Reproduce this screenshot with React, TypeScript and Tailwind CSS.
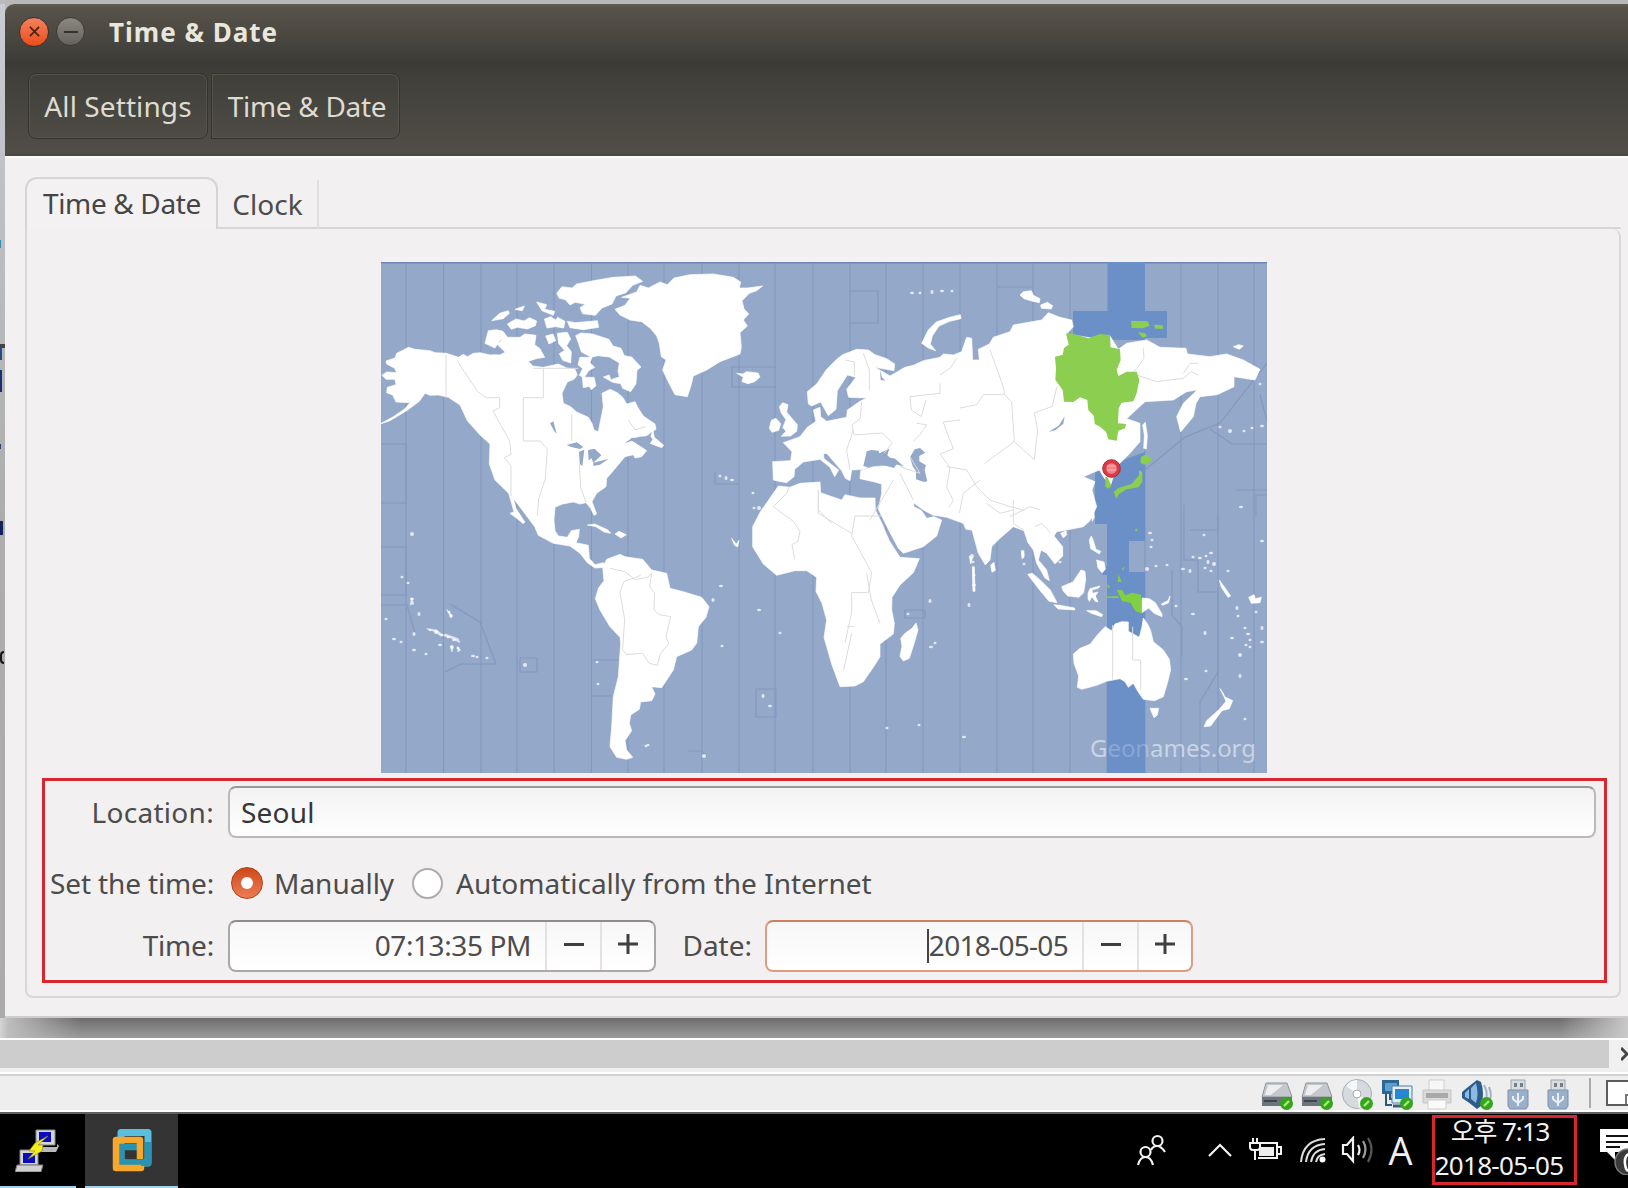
import React from "react";

const ZONE_LINES = [
  406, 443.5, 481, 517, 554, 591.5, 628, 664, 702, 739, 775, 813, 850, 886, 923, 960, 997, 1033, 1070, 1181, 1218, 1254,
];

const ATOLLS = [
  [412, 534], [402, 577], [408, 583], [412, 599], [419, 614], [386, 619], [394, 639], [401, 642], [414, 634], [414, 650], [426, 654],
  [430, 630], [436, 632], [442, 635], [448, 637], [440, 645], [452, 647], [458, 648], [454, 640], [449, 612], [451, 616], [473, 656], [477, 657],
  [487, 658], [525, 665], [597, 662], [598, 684], [721, 586], [713, 600], [722, 646], [759, 610], [780, 633], [763, 696], [770, 706],
  [646, 746], [648, 745], [704, 756], [887, 728], [919, 725], [964, 737], [930, 601], [908, 614], [931, 647], [935, 643], [969, 605],
  [1150, 533], [1152, 540], [1151, 547], [1147, 569], [1156, 566], [1167, 565], [1183, 569], [1190, 571], [1204, 535], [1200, 558],
  [1206, 556], [1208, 562], [1211, 553], [1205, 568], [1211, 571], [1214, 564], [1193, 557], [1228, 571], [1262, 541], [1237, 608], [1250, 640], [1248, 634], [1256, 612], [1262, 628], [1262, 642], [1246, 645],
  [1250, 647], [1240, 655], [1238, 616], [1206, 671], [1186, 679], [1205, 633], [1245, 719], [1193, 614], [1176, 606], [1240, 676], [1232, 638], [1245, 628],
  [1060, 562], [972, 556], [973, 562], [974, 575], [974, 585], [1023, 555], [1024, 564], [912, 293], [920, 293], [932, 292], [942, 291], [952, 291],
  [1220, 427], [1230, 431], [1244, 431], [1252, 428], [1262, 426], [1238, 347], [1260, 384], [1241, 507], [720, 476], [726, 478], [732, 480], [753, 493], [754, 508], [759, 508],
];

function WorldMap() {
  return (
    <svg viewBox="381 262 886 511" className="block h-[511px] w-[886px] shrink-0" aria-label="World time zone map">
      <rect x="381" y="262" width="886" height="511" fill="#94a9c9" />
      <g stroke="#8497bd" strokeWidth="1.1" fill="none">
        {ZONE_LINES.map((x) => (
          <path key={x} d={`M${x} 262V773`} />
        ))}
        <path d="M1107 680V773M1145 430V773M381 444h25v59h-25M381 547h25v48h-25M381 605h26l8 28M776 367h-44v20h44M850 291h28v32h-28M715 472v12h24M997 287h36M1267 444h-35l-22-15M1267 363l-47 60-35 14-40 33M1260 395l8 30" />
        <path d="M520 658h17v14h-17zM593 660h25M592 696h20M756 689h20v28h-20zM1190 530h28v-15M1184 505v55h14v32h20v80l-18 30v70M1172 570v45l10 12v30M1236 490h31M1256 515v-20h11M688 751h14l5 6M445 672l16-8h35l-16-42-30-18M905 610h20v8h-20z" />
      </g>
      <path d="M381 262.5H1267" stroke="#7187b3" strokeWidth="2" />
      <path
        d="M1107.500 262H1145V311H1167V338H1145V340H1073V311H1107.500zM1095 470L1145 452V541H1129V572H1145V640H1107V575H1102L1107 565V524H1095z M1107 640H1145V773H1107z"
        fill="#6b8fc7"
      />
      <g transform="translate(380 260) scale(.33333)" fill="#fff" stroke="#fff" strokeWidth="2" strokeLinejoin="bevel">
        <path d="M6 346L20 336L50 338L44 325L20 312L18 303L45 294L50 280L70 270L85 262L105 268L150 272L165 278L200 280L235 292L250 283L262 290L280 280L300 278L330 285L350 284L392 292L400 302L425 300L450 308L458 318L490 322L535 312L560 324L585 328L592 345L582 358L562 366L546 400L550 430L572 440L590 456L625 472L636 490L642 510L655 515L662 480L670 440L666 400L690 388L712 398L728 412L740 432L765 425L775 445L790 468L825 492L828 508L795 530L755 533L730 552L760 542L782 560L800 572L785 590L765 594L760 584L735 590L720 608L695 638L680 655L678 680L650 700L636 725L650 762L642 766L632 745L618 728L600 732L580 726L548 732L525 742L522 780L525 812L535 828L562 832L574 812L598 808L596 830L588 848L625 856L628 895L645 914L670 908L674 922L645 924L622 908L600 880L570 858L520 850L475 826L464 800L446 776L425 748L400 715L408 745L434 786L428 790L404 762L386 700L345 660L328 612L330 552L300 525L262 482L240 435L205 412L175 405L150 406L135 400L118 424L80 452L30 482L0 492L40 470L75 446L90 428L48 426L38 405L20 398L22 382L48 374L45 358L18 358z" />
        <path d="M530 100l16-20 30 4 14-12 50-10 60-10 66-4 22 16-30 12-20 22-30 10-12 24-30 12-20 22-38-5-8-18 16-10-30-6-16 8-14-16-18-4z" />
        <path d="M315 250l10-38 24-3 20 5 15 20-26 8-13 22zM350 252l30-20 40 0 14-10 34 4 -4 28 16 12 14 26-26 4-28 10-44-5-14-9-28-5 22-10zM335 182l24-22 26-8 3 8-18 16zM382 192l26-15 24 6 16-10 22 10-4 14-24 10-30-5-18 6zM405 148l28-10-6 14zM493 177l20-7 14 10 6-8 22 12-4 20-24-4-26 4zM470 126l30 8-6 14 30 6-4 12-34-14zM562 184l24 4 66-6 4 20-46 7-40-6zM497 228l22-6 8 20-20 10zM532 220l30-3 10 20-12 20 14 18-2 34-24-8-10-20 16-10-18-20zM587 227l16-8 34 3 50 16 12 20 24 7 10 22 22 4 28 30-12 10-3 40-16 24-24-10-6-14-24-4-28-16 18-6 4 14 26-8-4-18 4-24-30-18-34-4-20 5-30-16-8-25zM600 292l36 0-6 16 14 14-18 10-14 22-14-8 10-20-14-12zM607 352l35 0 6 25-14 12-6-10-18 4zM805 548l14-36 4 20 28 24-6 7z" />
      </g>
      <g transform="translate(660 260) scale(.33333)" fill="#fff" stroke="#fff" strokeWidth="2" strokeLinejoin="bevel">
        <path d="M-135 148L-105 136L-90 115L-115 112L-70 96L-60 76L-35 84L0 66L22 74L42 54L90 44L160 42L220 52L242 66L238 84L262 84L308 78L290 92L268 100L246 122L252 146L266 162L250 180L262 198L240 218L244 262L240 282L180 305L140 330L100 348L92 380L82 410L45 404L24 364L8 330L18 300L4 290L-2 250L-10 228L-28 206L-55 185L-90 180L-120 165z" />
        <path d="M230 340l18 2 12-7 34 4 6 12-16 14-20 6-18-6 4-14zM358 440l10-12 16 6-4 22 18 22 14 16-2 20-18 14-28 1 14-16-10-10 10-24-14-20zM328 505l6-24 14-6 14 16-6 20-20 6z" />
        <path d="M445 432L442 395L470 372L500 328L530 298L548 284L590 268L625 270L645 284L680 296L704 312L702 332L662 325L645 322L690 348L735 322L760 316L790 302L840 292L850 282L880 285L905 275L920 232L935 235L938 300L958 300L955 268L988 252L1000 232L1050 215L1060 195L1145 180L1165 158L1200 172L1235 180L1240 200L1220 222L1300 235L1350 228L1375 268L1400 250L1460 240L1500 262L1578 265L1582 282L1650 290L1700 282L1750 300L1800 328L1785 360L1722 350L1722 380L1672 404L1620 410L1608 430L1600 470L1562 516L1550 470L1570 430L1612 390L1580 395L1540 420L1455 425L1400 476L1440 490L1440 545L1410 580L1380 610L1345 625L1350 650L1335 658L1318 630L1270 650L1305 665L1296 690L1310 740L1290 782L1270 800L1220 810L1190 815L1182 828L1208 860L1208 888L1185 912L1160 880L1143 870L1135 900L1160 930L1168 962L1155 954L1130 910L1120 870L1104 848L1092 812L1060 800L1020 835L995 860L990 900L976 915L955 880L936 810L918 808L910 790L860 772L818 765L790 750L760 728L762 740L785 752L800 775L822 770L845 780L830 828L790 860L730 880L715 865L686 810L655 748L665 700L665 672L640 665L600 656L602 632L640 620L712 615L735 622L705 595L680 590L650 600L615 628L575 630L570 662L556 655L545 632L500 580L490 582L492 596L536 630L524 650L510 622L480 598L430 606L404 628L402 650L380 668L356 664L340 660L338 605L392 602L396 575L370 548L420 530L442 502L468 484L460 450L480 442L482 470L500 484L560 472L562 450L600 424L620 414L566 412L560 388L588 352L562 345L532 392L528 448L505 467L482 426L455 438z" />
        <path d="M785 250l20-40 24-24 40-14 32-8 2 12-34 8-32 14-20 30-6 24 16 20-22-8zM1080 105l10-10 24-3 6 14 20 10-2 12-20-4-26-8zM1142 135l20-8 16 10-4 10-30-2zM1720 260l16-6 14 4-12 10zM1448 495l8-8 6 40-3 40-8-2 2-40z" />
      </g>
      <g transform="translate(800 510) scale(.33333)" fill="#fff" stroke="#fff" strokeWidth="2" strokeLinejoin="bevel">
        <path d="M-65 -72L-30 -68L0 -80L60 -84L62 -52L90 -42L125 -30L135 -46L180 -36L225 -36L226 0L245 38L268 92L300 142L358 146L340 188L300 225L276 262L275 300L283 340L280 372L240 402L240 440L220 472L190 515L165 528L120 530L95 462L72 382L80 330L66 280L48 244L50 202L20 182L-15 182L-70 196L-110 162L-142 110L-142 50L-118 4L-90 -36z" />
        <path d="M302 385l14-16 20-14 12-16 6 20-10 36-16 50-18 8-10-14 6-30zM572 165l10-8 4 24-10 6zM683 193l14-3 30 26 24 24 16 30 4 8-24-4-30-36zM762 284l18 2 44 8 0 6-50-3zM785 230l14-6 20-8 24-36 12 4 2 24-6 40-14 14-34-4-14-16zM864 250l6-14 30-8-4 6-20 6 2 10 16-4-8 12 8 18-8-2-10-14-8 14-4-8zM868 90l6-12 6 14 8 26 14 6-4 8-26-16zM890 150l22 6 4 22-10 10-12-14zM860 302l28 0 20 12-4 6-30-10zM875 14l6-12 2 20-6 12zM782 70l16-8 2 12-10 10zM1026 264l22 2 18 12 20 34 0 8-24-10-16-16-20 14zM1084 282l20-10 6-14-4 20-18 8zM1050 595l26 0-4 20-10 8zM1260 536l10 14 4 10 24 12-10 24-22 6-34 46-20 2 8-18 38-34 20-24-6-14zM1258 210l16 22 18 26-8 4-20-30zM1346 262l16-8 4 12 18-4-4 16-26 2zM508 138l10 4-6 20zM517 170l6 0 2 74-6 0zM664 122l8 0 0 20-6 4z" />
        <path d="M820 432L840 415L870 403L892 375L915 350L935 362L945 342L965 335L985 336L985 364L1018 382L1026 350L1030 324L1044 344L1052 362L1060 395L1090 420L1108 448L1112 480L1102 520L1090 560L1064 572L1030 568L1014 545L1000 520L985 532L975 515L960 506L920 514L890 526L845 538L832 532L836 498L822 460z" />
      </g>
      <g transform="translate(380 510) scale(.33333)" fill="#fff" stroke="#fff" strokeWidth="2" strokeLinejoin="bevel">
        <path d="M668 172L680 148L720 133L735 140L788 148L815 180L860 190L870 235L910 245L965 262L987 290L978 322L955 350L950 400L935 420L890 440L880 480L845 533L815 530L825 552L815 572L782 576L778 598L752 615L748 640L755 662L735 692L740 720L758 742L740 748L710 742L690 710L695 650L700 560L715 500L722 400L720 382L690 350L660 300L646 266L655 235L672 212z" />
        <path d="M622 45l22-3 40 18 8 10-20-4-24-16zM705 72l12-8 22 10-16 10zM390 10l10-4 34 30-4 4zM1055 85l8 20 10 6 4-20-8 12z" />
        <path d="M140 356l30 4 20 16-8 2-20-14zM195 372l40 14 4 12-20-12-26-8zM210 408l6 18 4-16zM200 298l18 20-6 4zM95 262l6 20-10 2zM232 410l10 10-8 6z" opacity=".75" />
      </g>
      <g fill="#fff" opacity=".75">
        {ATOLLS.map(([x, y], i) => (
          <ellipse key={i} cx={x} cy={y} rx={i % 3 === 0 ? 2 : 1.5} ry={i % 4 === 0 ? 2 : 1.2} />
        ))}
      </g>
      <g transform="translate(660 260) scale(.33333)" fill="#94a9c9">
        <path d="M610 618l10-44 14-4 22 2 2 8 30-14-6 20 28 26-8 12-30-8-24-6-24 12zM750 592l14-24 16-4 16 14-18 10 0 16 20 12-4 14 8 34-10 2-24-8 0-24-10-16zM660 330l6 22 10 10-14-2z" />
        <path d="M1166 515l30-18 18-28-4 22-24 20z" />
        <path d="M-280 555l30-8 20 14-10 6-26-6zM-243 575l16-6-6 50-8-8zM-216 570l20-4 20 20-24 22-6-14-8 8zM-200 608l46-12-26 18-20 4zM-330 490l10-6 10 38-8-10zM-88 540l26-10 32-2 8 10-14 22-26-4z" />
      </g>
      <g transform="translate(660 260) scale(.33333)" fill="none" stroke="#dcdcdc" strokeWidth="3">
        <path d="M-642 285v128M-607 305l60 90 26 18h40v30l-20 10 50 90 4 40-20 10 20 25 0 90M-380 325h40h95M-350 325v88h-60v130h50l22 24-6 90-20 60-4 50M-265 463v80M-242 612l4 70 16 45M-95 480l20 30 30-10" />
        <path d="M555 300l28 6 0 40M610 280l18 50 0 60M605 425l-4 50-25 20 6 30 85-6 30 30-24 30M580 510l-20 60 10 60M840 370v30l-90 10 4 40 30 20 14-50M770 490l30 4-20 30-20 20M900 480l-50 6 10 30 20 50-40 16 30 40-10 60 20 40-14 20M340 740l40-40 8-20M475 700v50l40 40M840 345l30-20 20-30M990 270l40 110 4 24-64 0-20 30-50 10M1035 405l20 20 8 120-90 66M1063 545l60 54 10-90-10-50 54-20 14-60M860 620l60 10 30 50 40 40 60 20 40 10M960 660l-50 40-12 60M1050 770l60-30 30 10M1430 345l60 20 80-10 24-20 20 10M1570 340l20-30 26 0M1450 265l2 30-22 30-12 14M720 640l40 80M720 620l60 20-30-50M630 780l70-120" />
      </g>
      <g transform="translate(800 510) scale(.33333)" fill="none" stroke="#dcdcdc" strokeWidth="3">
        <path d="M-80-10l60 44 20 30-6 30-18 10 8 44M55-60l0 70 100 60M165 18h80M165 18l-10 60 60 110-10 60-50 0 0 60-20 90M200 190l14 80 26 70M155 370l-24 110M140 350h24M938 345v165M998 350v100h24v90M705 50l20-10 28 30M640-30l0 70 30 20M560-20l40 30 40-10" />
      </g>
      <g transform="translate(380 510) scale(.33333)" fill="none" stroke="#dcdcdc" strokeWidth="3">
        <path d="M690 175l45 10 30 24 40-8 10-12M815 190l-6 40 15 20-2 50 16 14 34 6-14 60 8 20-24 30-10 36-24-6-20-30-50 4-10-16 6-90-14-80 12-34 30-10 20-8" />
      </g>
      <g transform="translate(960 260) scale(.33333)" fill="#8bce50">
        <path d="M318 220L350 224L385 235L420 222L450 225L452 262L480 268L482 300L470 330L475 348L500 335L530 335L538 360L530 400L520 424L485 428L476 445L474 490L498 492L495 505L475 512L470 542L445 538L438 515L420 500L404 492L402 468L385 450L382 420L360 412L340 426L312 425L308 390L286 360L288 325L285 290L308 284L312 264L326 254z" />
        <path d="M513 183l50 0 6 14-20 8-34-1zM582 194l26 2 2 10-24 0zM535 217l20 2 6 10-14 4zM543 590l14-6 18 12-4 10-18 8-12-6zM537 630l10 6 0 30-12 16-36 6-22 14-8 14-8-20 14-12 40-12 22-26zM436 650l14 4 4 24-8 8-10-6z" />
      </g>
      <g transform="translate(800 510) scale(.33333)" fill="#7fd042">
        <path d="M950 240l16 0 10 16 20-8 27 6 0 56-16-6-16-26-24-4zM955 192l10 24-12 0zM922 222l8 8-6 6zM914 260l40-2 2 6-40 0zM1006 56h6v8h-6zM966 176l8-8-4 14z" />
      </g>
      <g>
        <path d="M1107 476l4 9 3-9z" fill="#f6f6f6" />
        <circle cx="1111.5" cy="468.5" r="8.8" fill="#d93c43" stroke="#a82a32" strokeWidth="1" />
        <circle cx="1111.5" cy="468.5" r="5.2" fill="#f08488" />
        <path d="M1107 466h9M1107 470h9" stroke="#f8b4b6" />
      </g>
      <text x="1090" y="757" fontSize="24" textLength="166" fontFamily="'Noto Sans', sans-serif" fill="#fff" fillOpacity=".5">
        <tspan>G</tspan><tspan fillOpacity=".22">eon</tspan><tspan>ames.org</tspan>
      </text>
    </svg>
  );
}

function SpinButtons() {
  return (
    <>
      <span className="flex h-full w-[55px] items-center justify-center border-l-2 border-[#e4e2e1]">
        <span className="mb-[4px] h-[3px] w-[20px] bg-[#3f3f3f]" />
      </span>
      <span className="flex h-full w-[54px] items-center justify-center border-l-2 border-[#e4e2e1]">
        <svg viewBox="0 0 20 20" className="mb-[4px] h-5 w-5" stroke="#3f3f3f" strokeWidth="3">
          <path d="M0 10h20M10 0v20" />
        </svg>
      </span>
    </>
  );
}

function Check() {
  return (
    <g>
      <circle cx="25.5" cy="24.5" r="6.5" fill="#35a51c" />
      <path d="M23 27l5-5" stroke="#a6ea7c" strokeWidth="2.4" />
    </g>
  );
}

function Drive() {
  return (
    <svg viewBox="0 0 32 32" className="h-8 w-8">
      <path d="M5 4h21l5 14H1z" fill="#c4c8cd" stroke="#8f9499" />
      <path d="M7 6h15l-12 10H4z" fill="#eceef0" />
      <path d="M1 18h30v9H1z" fill="#6b747d" />
      <path d="M3 22h13" stroke="#3d464f" strokeWidth="2" />
      <Check />
    </svg>
  );
}

function Disc() {
  return (
    <svg viewBox="0 0 32 32" className="h-8 w-8">
      <circle cx="16" cy="15" r="14.5" fill="#d6d9de" stroke="#a9adb3" />
      <path d="M16 15L5 7A14 14 0 0 1 16 1zM16 15l12 7a14 14 0 0 1-10 7z" fill="#f6f7f8" />
      <circle cx="16" cy="15" r="4" fill="#fff" stroke="#a8a8ad" />
      <Check />
    </svg>
  );
}

function NetworkIcon() {
  return (
    <svg viewBox="0 0 32 32" className="h-8 w-8">
      <path d="M1 1h17v14H1z" fill="#2b6697" />
      <path d="M4 4h12v8H4z" fill="#5da1d2" />
      <path d="M5 15v11h6M9 15v5h4" stroke="#2c5878" strokeWidth="2" fill="none" />
      <path d="M11 7h20v17H11z" fill="#e4eef6" stroke="#4a7fa8" />
      <path d="M14 10h14v10H14z" fill="#2787d2" />
      <path d="M12 27h12" stroke="#3b617d" strokeWidth="3" />
      <Check />
    </svg>
  );
}

function PrinterIcon() {
  return (
    <svg viewBox="0 0 32 32" className="h-8 w-8">
      <path d="M8 1h15v11H8z" fill="#f7f7f7" stroke="#cfcfcf" />
      <path d="M2 11h28v13H2z" fill="#dadada" stroke="#c5c5c5" />
      <path d="M5 14h22v5H5z" fill="#a9a9a9" />
      <path d="M7 21h18v9H7z" fill="#fafafa" stroke="#cfcfcf" />
    </svg>
  );
}

function SoundIcon() {
  return (
    <svg viewBox="0 0 32 32" className="h-8 w-8">
      <path d="M1 13l6-5 9-7 4 2q4 12 0 24l-4 3-9-7-6-4z" fill="#2d5c8c" />
      <path d="M4 14l4-4v10l-4-2zM10 9l5-5q3 11 0 20l-5-4z" fill="#8bbbe2" />
      <path d="M23 6q5 9 1 17M28 8q3 7 1 12" stroke="#9fb4ca" strokeWidth="2" fill="none" />
      <Check />
    </svg>
  );
}

function UsbIcon() {
  return (
    <svg viewBox="0 0 32 32" className="h-8 w-8">
      <path d="M9 1h14v11H9z" fill="#d9dce0" stroke="#9fa5ab" />
      <path d="M12 4h3v4h-3zM18 4h3v4h-3z" fill="#777e86" />
      <path d="M6 11h20v16l-2 3H8l-2-3z" fill="#9aafc9" stroke="#7d92ad" />
      <path d="M16 14v13M11 17v3l5 4 5-4v-3" stroke="#e9f0f7" strokeWidth="2" fill="none" />
    </svg>
  );
}

function PuttyIcon() {
  return (
    <svg viewBox="0 0 44 44" className="h-11 w-11">
      <path d="M21 2h19v15H21z" fill="#d6d6d6" stroke="#888" />
      <path d="M24 4h12v10H24z" fill="#0b0bc4" />
      <path d="M22 19h20v-3l2 2-3 6H24z" fill="#b9b9b9" />
      <path d="M5 22h18v15H5z" fill="#d6d6d6" stroke="#888" />
      <path d="M8 25h12v10H8z" fill="#0b0bc4" />
      <path d="M2 37h26l-2 7H0z" fill="#d0d0d0" stroke="#777" />
      <path d="M33 8L20 15l-6 8 6 0-7 8 14-8 1-6-5 0z" fill="#f5ee1d" stroke="#8d8910" strokeWidth=".6" />
    </svg>
  );
}

function VmIcon() {
  return (
    <svg viewBox="0 0 40 44" className="h-11 w-10" fill="none" strokeLinejoin="round">
      <path d="M9 35V4.500H36V35z" stroke="#58bfdc" strokeWidth="7" />
      <path d="M36 14V35H9V19h18" stroke="#2a93b1" strokeWidth="6.500" />
      <path d="M28 31V12H4V40H29V38" stroke="#f6a72c" strokeWidth="6.500" />
    </svg>
  );
}

export default function App() {
  return (
    <div className="flex h-[1188px] w-[1628px] flex-col overflow-hidden bg-[#b9b9bb] font-['Noto_Sans','Noto_Sans_CJK_KR',sans-serif] text-[28px] leading-none text-[#4c4c4c]">
      <div className="flex h-[1018px] shrink-0 pt-1">
        <div className="flex w-[5px] shrink-0 flex-col overflow-hidden bg-gradient-to-b from-[#c9ccd3] via-[#adadad] to-[#ababab]">
          <span className="mt-[236px] h-[8px] w-px bg-[#3290b4]" />
          <span className="mt-[96px] h-[4px] w-[5px] bg-[#444]" />
          <span className="h-[12px] w-[2px] bg-[#234b87]" />
          <span className="mt-[10px] h-[22px] w-[2px] bg-[#1a2d78]" />
          <span className="mt-[52px] h-[5px] w-px bg-[#33406f]" />
          <span className="mt-[72px] h-[14px] w-[3px] bg-[#14235d]" />
          <span className="mt-[116px] h-[13px] w-[4px] rounded-l-full border-2 border-r-0 border-[#191919]" />
        </div>
        <div className="flex w-[1623px] shrink-0 flex-col overflow-hidden rounded-tl-[9px] border-b-2 border-[#cfcdc9] bg-[#f2f0f0]">
          <header className="h-[152px] shrink-0 bg-[linear-gradient(#615d54_0px,#57534a_4px,#3f3e39_54px,#3a3935_58px,#3f3e39_66px,#514e47_148px,#48463f_152px)]">
            <div className="flex h-[55px] items-center pl-[14px]">
              <span className="flex h-[30px] w-[30px] items-center justify-center rounded-full border border-[#36342f] bg-gradient-to-b from-[#f4815c] to-[#ea4a14]">
                <svg viewBox="0 0 12 12" className="h-[11px] w-[11px]" stroke="#57200c" strokeWidth="2"><path d="M1 1l10 10M11 1L1 11" /></svg>
              </span>
              <span className="ml-[7px] flex h-[29px] w-[29px] items-center justify-center rounded-full border border-[#3b3934] bg-gradient-to-b from-[#8b897f] to-[#64625b]">
                <span className="h-[2px] w-[14px] bg-[#33322e]" />
              </span>
              <h1 className="ml-[24px] whitespace-nowrap text-[26px] font-bold tracking-[1px] text-[#e9e6dd]">Time &amp; Date</h1>
            </div>
            <div className="flex gap-[3px] pl-[23px] pt-[14px] text-[#dedbd0]">
              <button className="flex h-[66px] w-[180px] items-center justify-center whitespace-nowrap rounded-lg border border-[#34332f] tracking-[0.1px] shadow-[inset_0_0_0_1px_#55534c]">All Settings</button>
              <button className="flex h-[66px] w-[189px] items-center justify-center whitespace-nowrap rounded-r-lg border border-[#34332f] pl-[3px] tracking-[-0.3px] shadow-[inset_0_0_0_1px_#55534c]">Time &amp; Date</button>
            </div>
          </header>
          <main className="flex flex-col border-t-2 border-[#fbfafa] pl-[20px] pr-[7px] pt-[19px]">
            <div className="flex h-[52px] items-end">
              <div className="z-10 flex h-[52px] w-[193px] shrink-0 items-center justify-center whitespace-nowrap rounded-t-xl border-2 border-b-0 border-[#d7d5d4] bg-[#f3f1f1] pb-[2px] pl-[1px] tracking-[-0.35px] text-[#454545]">Time &amp; Date</div>
              <div className="flex h-[49px] w-[101px] shrink-0 items-center justify-center border-b-2 border-r-2 border-b-[#d9d7d6] border-r-[#e2e0df] pt-[1px] text-[#4c4c4c]">Clock</div>
              <div className="h-[2px] flex-1 rounded-tr-lg bg-[#d7d5d4]" />
            </div>
            <section className="flex h-[769px] flex-col rounded-b-lg rounded-tr-lg border-2 border-t-0 border-[#d9d7d7] pl-[15px] pr-[13px]">
              <div className="flex justify-center pb-[5px] pt-[33px]">
                <WorldMap />
              </div>
              <div className="flex h-[205px] w-[1565px] shrink-0 flex-col border-3 border-[#d8262f] pt-[5px]">
                <div className="flex h-[52px] items-center">
                  <span className="w-[169px] shrink-0 text-right tracking-[0.3px]">Location:</span>
                  <div className="ml-[14px] flex h-[52px] w-[1368px] items-center rounded-lg border-2 border-[#bcbab9] border-t-[#9b9a99] bg-gradient-to-b from-[#f3f3f3] to-white pl-[11px] tracking-[0.2px] text-[#363636]">Seoul</div>
                </div>
                <div className="mt-[19px] flex h-[52px] items-center whitespace-nowrap">
                  <span className="w-[169px] shrink-0 text-right tracking-[-0.15px]">Set the time:</span>
                  <span className="ml-[17px] flex h-[32px] w-[32px] items-center justify-center rounded-full border border-[#a8431d] bg-gradient-to-b from-[#cf4814] to-[#ee7c54]">
                    <span className="h-3 w-3 rounded-full bg-white" />
                  </span>
                  <span className="ml-[11px] w-[121px]">Manually</span>
                  <span className="ml-[17px] h-[31px] w-[31px] rounded-full border-2 border-[#aeacab] bg-white" />
                  <span className="ml-[13px]">Automatically from the Internet</span>
                </div>
                <div className="mt-[11px] flex h-[52px] items-center">
                  <span className="w-[169px] shrink-0 pb-[2px] text-right tracking-[-0.2px]">Time:</span>
                  <div className="ml-[14px] flex h-[52px] w-[428px] items-center justify-end rounded-lg border-2 border-[#aaa8a7] border-t-[#8e8d8c] bg-gradient-to-b from-[#f7f7f7] to-white">
                    <span className="mr-[14px] pb-[2px] tracking-[-0.4px]">07:13:35 PM</span>
                    <SpinButtons />
                  </div>
                  <span className="w-[96px] pb-[2px] text-right">Date:</span>
                  <div className="ml-[13px] flex h-[52px] w-[428px] items-center justify-end rounded-lg border-2 border-[#df9c84] border-t-[#c98362] bg-gradient-to-b from-[#f7f7f7] to-white">
                    <span className="mr-[14px] flex h-[34px] items-center border-l-2 border-[#444] pb-[2px] tracking-[-0.7px]">2018-05-05</span>
                    <SpinButtons />
                  </div>
                </div>
              </div>
            </section>
          </main>
        </div>
      </div>
      <div className="h-[20px] shrink-0 bg-[linear-gradient(to_right,#d5d5d5_0px,#bdbdbd_8px,transparent_80px,transparent_1560px,#c9c9c9_1628px),linear-gradient(#6d6d6e,#9b9b9c)]" />
      <div className="flex h-[36px] shrink-0 border-y-2 border-white bg-[#efefef]">
        <div className="h-[28px] w-[1609px] shrink-0 bg-[#cdcdcd]" />
        <div className="flex h-[28px] flex-1 items-center justify-end overflow-hidden bg-[#f0f0f0]">
          <svg viewBox="0 0 7 14" className="h-[14px] w-[7px]" stroke="#444" strokeWidth="3" fill="none"><path d="M0 1l6 6-6 6" /></svg>
        </div>
      </div>
      <div className="flex h-[38px] shrink-0 items-center justify-end border-b-2 border-t-2 border-b-white border-t-[#d0d0d0] bg-[#eeeeee]">
        <div className="flex pt-1 pr-[1px]">
          <div className="flex gap-[8px]">
            <Drive /><Drive /><Disc /><NetworkIcon /><PrinterIcon /><SoundIcon />
          </div>
          <div className="ml-[9px] flex gap-[8px]">
            <UsbIcon /><UsbIcon />
          </div>
        </div>
        <span className="ml-[14px] h-[30px] w-[2px] bg-[#aaa]" />
        <div className="ml-[15px] flex h-[26px] w-[22px] items-end justify-end border-2 border-r-0 border-[#5c5c5c] bg-white">
          <span className="h-[10px] w-[3px] border-l-2 border-t-2 border-[#777]" />
        </div>
      </div>
      <footer className="flex h-[76px] shrink-0 border-t-2 border-[#606060] bg-black text-white">
        <div className="flex w-[76px] items-center border-b-2 border-[#9dd3ee] pl-[15px]"><PuttyIcon /></div>
        <div className="ml-[9px] flex w-[93px] items-center justify-center border-b-2 border-[#9dd3ee] bg-[#343434]"><VmIcon /></div>
        <div className="ml-auto flex items-center pb-[2px]">
          <svg viewBox="0 0 30 32" className="h-8 w-[30px]" fill="none" stroke="#f2f2f2" strokeWidth="2.2">
            <circle cx="20.5" cy="7" r="5" /><circle cx="8.500" cy="18" r="5" /><path d="M14 16q2-4 6-4t8 6M1 31q2-8 7.500-8t7.500 8" />
          </svg>
          <svg viewBox="0 0 24 14" className="ml-[41px] h-[14px] w-6" fill="none" stroke="#f2f2f2" strokeWidth="2.2"><path d="M1 13L12 2l11 11" /></svg>
          <svg viewBox="0 0 34 24" className="ml-[17px] h-6 w-[34px]" fill="none" stroke="#f2f2f2" strokeWidth="2">
            <path d="M4 0v5M8 0v5M1 5h10v4q0 3-3 3H4q-3 0-3-3zM6 12v10M12 5h16v15H9M29 9h3v7h-3" /><path d="M10 9h15v9H10z" fill="#eee" stroke="none" />
          </svg>
          <svg viewBox="0 0 26 26" className="ml-[17px] h-[26px] w-[26px]" fill="none" stroke="#dedede" strokeWidth="2">
            <path d="M1 25Q3 3 25 2M6 25Q8 8 25 7M11 25Q13 13 25 12M16 25q1-7 9-8" /><circle cx="22.5" cy="22.5" r="3" fill="#fff" stroke="none" />
          </svg>
          <svg viewBox="0 0 34 28" className="ml-[15px] h-7 w-[34px]" fill="none" stroke="#f2f2f2" strokeWidth="2.2">
            <path d="M2 9h4l6-7v23l-6-7H2z" /><path d="M17 9q3 5 0 10" /><path d="M22 5q5 8 0 17" stroke="#9c9c9c" /><path d="M27 2q7 11 0 24" stroke="#575757" />
          </svg>
          <span className="ml-[13px] flex w-[24px] justify-center font-['Open_Sans',sans-serif] text-[38px] tracking-[-1px] text-[#f0f0f0]">A</span>
          <div className="ml-[20px] flex h-[70px] w-[145px] flex-col items-center border-3 border-[#d8262f] text-[26px] leading-[35px] text-[#f2f2f2]">
            <span className="-mt-[4px] mr-[9px] whitespace-nowrap tracking-[-1.1px]">오후 7:13</span>
            <span className="-mt-[1px] mr-[11px] whitespace-nowrap tracking-[-0.7px]">2018-05-05</span>
          </div>
          <svg viewBox="0 0 29 50" className="ml-[22px] h-[50px] w-[29px]">
            <path d="M1 4h28v23H16v8l-8-8H1z" fill="#fff" />
            <path d="M7 11h22M7 17h22M7 22h14" stroke="#111" strokeWidth="2" />
            <circle cx="29" cy="37" r="13" fill="#3a3a3a" stroke="#7a7a7a" strokeWidth="1.500" />
            <path d="M30 29q-5 2-4 10t4 6" stroke="#fff" strokeWidth="2.500" fill="none" />
          </svg>
        </div>
      </footer>
    </div>
  );
}
